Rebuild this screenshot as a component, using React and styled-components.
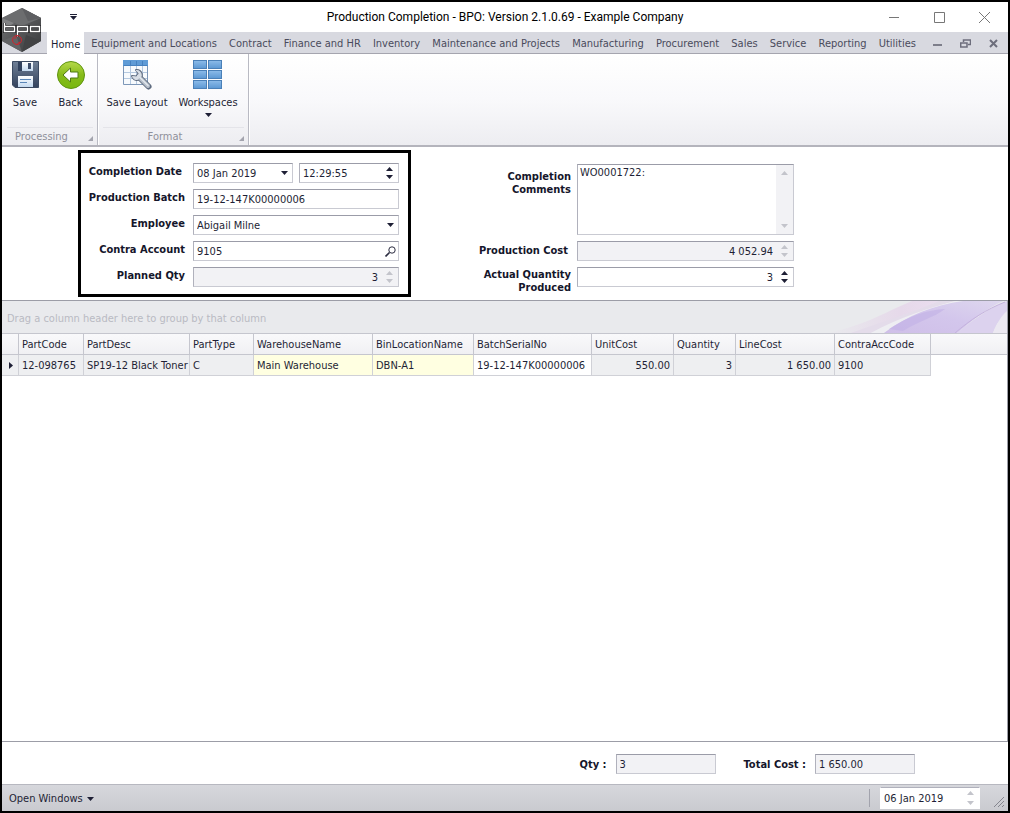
import React, { useState } from "react";
import styled, { createGlobalStyle } from "styled-components";

const GlobalStyle = createGlobalStyle`
  * { box-sizing: border-box; }
  body {
    margin: 0;
    background: #fff;
    color: #1e1f35;
    font-family: "DejaVu Sans Condensed", "DejaVu Sans", Tahoma, sans-serif;
    font-size: 11px;
    line-height: 14px;
  }
  button, input, select, textarea {
    margin: 0;
    padding: 0;
    border: 0;
    border-radius: 0;
    background: none;
    color: inherit;
    font: inherit;
    outline: none;
  }
`;

const Window = styled.div`
  display: flex;
  flex-direction: column;
  min-height: 100vh;
  border: 2px solid #000;
  position: relative;
`;

/* ---------- title bar ---------- */

const TitleBar = styled.header`
  display: grid;
  grid-template-columns: 1fr auto 1fr;
  align-items: center;
  height: 30px;
`;

const Title = styled.h1`
  margin: 0;
  color: #000;
  font-family: Roboto, "Segoe UI", sans-serif;
  font-size: 12px;
  font-weight: 400;
`;

const QuickAccess = styled.button`
  display: flex;
  justify-self: start;
  margin-left: 67px;
`;

const WindowButtons = styled.div`
  display: flex;
  justify-content: flex-end;
  gap: 34px;
  padding-right: 18px;
  button { display: flex; }
`;

const AppLogo = styled.svg`
  position: absolute;
  left: 0;
  top: 5px;
`;

/* ---------- ribbon tabs ---------- */

const TabBar = styled.div`
  display: flex;
  align-items: flex-end;
  height: 22px;
  padding-left: 45px;
  background: #d8d9e0;
  border-bottom: 1px solid #a5a5af;
`;

const Tabs = styled.nav`
  display: flex;
  flex: 1;
  justify-content: space-between;
  margin-left: 2px;
`;

const Tab = styled.button`
  height: ${(p) => (p.$active ? 22 : 21)}px;
  margin-bottom: ${(p) => (p.$active ? -1 : 0)}px;
  padding: 3px ${(p) => (p.$active ? 4 : 5)}px 0;
  color: ${(p) => (p.$active ? "#1e1f35" : "#4a4b5c")};
  background: ${(p) => (p.$active ? "#fff" : "transparent")};
  white-space: nowrap;
`;

const MdiButtons = styled.div`
  display: flex;
  align-items: center;
  gap: 18px;
  height: 20px;
  padding: 0 10px 0 12px;
  button { display: flex; }
`;

/* ---------- ribbon ---------- */

const Ribbon = styled.div`
  display: flex;
  height: 93px;
  background: linear-gradient(#fff, #f9f9fb 50%, #ededf1);
  border-bottom: 2px solid #b4b4bc;
`;

const RibbonGroup = styled.section`
  display: flex;
  flex-direction: column;
  justify-content: space-between;
  border-right: 1px solid #b9bac3;
  box-shadow: 1px 0 #fff;
`;

const RibbonItems = styled.div`
  display: flex;
  padding: 5px 4px 0 ${(p) => (p.$indent ? 4 : 0)}px;
`;

const RibbonButton = styled.button`
  display: flex;
  flex-direction: column;
  align-items: center;
  width: ${(p) => p.$width}px;
  white-space: nowrap;
  svg { display: block; }
  span { margin: 5px 0 3px; }
`;

const GroupCaption = styled.div`
  display: flex;
  align-items: flex-end;
  margin: 0 4px 1px 5px;
  padding-top: 2px;
  border-top: 1px solid #e4e4e9;
  color: #8f909b;
  h2 {
    flex: 1;
    margin: 0;
    padding-right: 12px;
    font-size: 11px;
    font-weight: 400;
    text-align: center;
  }
  svg { margin-bottom: 3px; }
`;

/* ---------- form ---------- */

const Form = styled.form`
  display: flex;
  align-items: flex-start;
  gap: 60px;
  padding: 3px 0 3px 76px;
`;

const Highlight = styled.div`
  display: grid;
  grid-template-columns: 97px 206px;
  grid-auto-rows: 20px;
  gap: 6px 8px;
  width: 333px;
  height: 147px;
  padding: 10px 0 0 7px;
  border: 3px solid #000;
`;

const Details = styled.div`
  display: grid;
  grid-template-columns: 100px 217px;
  grid-template-rows: 71px 20px 20px;
  gap: 6px;
  padding-top: 14px;
`;

const Label = styled.label`
  color: #15162b;
  font-weight: 700;
  line-height: ${(p) => (p.$stacked ? 13 : 16)}px;
  padding-top: ${(p) => p.$top || 1}px;
  padding-right: ${(p) => (p.$inset ? 3 : 0)}px;
  text-align: right;
  white-space: nowrap;
`;

const Pair = styled.div`
  display: flex;
  gap: 6px;
`;

const Box = styled.div`
  display: flex;
  flex: 1;
  height: ${(p) => (p.$tall ? 71 : 20)}px;
  min-width: 0;
  border: 1px solid #c9cad2;
  border-top-color: #9b9ca8;
  border-left-color: #b0b1bc;
  background: ${(p) => (p.$disabled ? "#f2f2f5" : "#fff")};
  position: relative;
`;

const Input = styled.input`
  flex: 1;
  width: 100%;
  min-width: 0;
  padding: 2px 3px 0;
  text-align: ${(p) => (p.$right ? "right" : "left")};
`;

const Select = styled.select`
  flex: 1;
  padding: 2px 3px 0;
  appearance: none;
`;

const SelectArrow = styled.span`
  display: flex;
  align-items: center;
  position: absolute;
  right: 4px;
  top: 0;
  bottom: 0;
  pointer-events: none;
`;

const TextArea = styled.textarea`
  flex: 1;
  padding: 0 2px;
  line-height: 15px;
  resize: none;
  overflow: hidden;
`;

const BoxButton = styled.button`
  display: flex;
  align-items: center;
  justify-content: center;
  width: 16px;
  color: #1e1f35;
`;

const SpinButtons = styled.div`
  display: flex;
  flex-direction: column;
  justify-content: space-between;
  width: 17px;
  padding: ${(p) => (p.$tall ? 6 : 3)}px 0;
  background: ${(p) => (p.$tall ? "#f2f2f5" : "none")};
  color: ${(p) => (p.$muted ? "#c3c4cb" : "#1e1f35")};
  button {
    display: flex;
    justify-content: center;
  }
`;

/* ---------- grid ---------- */

const GridArea = styled.main`
  flex: 1;
  display: flex;
  flex-direction: column;
  border: 1px solid #9c9da7;
  border-left: 0;
`;

const GroupPanel = styled.div`
  display: flex;
  align-items: center;
  justify-content: space-between;
  height: 32px;
  padding-left: 5px;
  background: #e9eaed;
  color: #b9bac3;
  span { padding-top: 3px; }
  svg { display: block; }
`;

const Table = styled.table`
  width: 100%;
  table-layout: fixed;
  border-collapse: separate;
  border-spacing: 0;
`;

const Th = styled.th`
  height: 22px;
  padding: 2px 3px 0;
  border-top: 1px solid #c5c6ce;
  border-bottom: 1px solid #c5c6ce;
  border-right: ${(p) => (p.$last ? 0 : "1px solid #c5c6ce")};
  background: linear-gradient(#f9f9fb, #f0f0f3);
  font-weight: 400;
  text-align: left;
  white-space: nowrap;
`;

const tones = { gray: "#eeeff1", yellow: "#ffffe1", white: "#fff" };

const Td = styled.td`
  height: 21px;
  padding: 2px 3px 0;
  border-right: 1px solid #d0d1d7;
  border-bottom: 1px solid #d0d1d7;
  background: ${(p) => tones[p.$tone]};
  text-align: ${(p) => (p.$right ? "right" : "left")};
  white-space: nowrap;
`;

const RowMark = styled(Td)`
  padding: 0 0 0 7px;
  svg { display: block; }
`;

/* ---------- footer ---------- */

const Totals = styled.div`
  display: flex;
  align-items: center;
  justify-content: flex-end;
  gap: 28px;
  height: 42px;
  padding-right: 93px;
  padding-top: 2px;
`;

const Total = styled.div`
  display: flex;
  align-items: center;
  gap: 9px;
`;

const TotalBox = styled(Box)`
  flex: none;
  width: 100px;
`;

const StatusBar = styled.footer`
  display: flex;
  align-items: center;
  height: 27px;
  padding-left: 7px;
  border-top: 1px solid #b7b8c0;
  background: linear-gradient(#d6d7dc, #c9cacf);
`;

const OpenWindows = styled.button`
  display: flex;
  align-items: center;
  gap: 4px;
  margin-right: auto;
  padding-top: 1px;
`;

const Divider = styled.span`
  width: 1px;
  height: 18px;
  margin-right: 10px;
  background: #a2a3ad;
`;

const StatusDate = styled(Box)`
  flex: none;
  width: 100px;
  height: 22px;
  border-color: #fff;
  border-top-color: #b0b1bc;
`;

const Grip = styled.svg`
  align-self: flex-end;
  margin: 0 3px 3px 13px;
`;

const tabs = [
  "Equipment and Locations", "Contract", "Finance and HR", "Inventory",
  "Maintenance and Projects", "Manufacturing", "Procurement", "Sales",
  "Service", "Reporting", "Utilities",
];

const columns = [
  { name: "PartCode", width: 65, value: "12-098765", tone: "gray" },
  { name: "PartDesc", width: 106, value: "SP19-12 Black Toner", tone: "gray" },
  { name: "PartType", width: 64, value: "C", tone: "gray" },
  { name: "WarehouseName", width: 119, value: "Main Warehouse", tone: "yellow" },
  { name: "BinLocationName", width: 101, value: "DBN-A1", tone: "yellow" },
  { name: "BatchSerialNo", width: 118, value: "19-12-147K00000006", tone: "white" },
  { name: "UnitCost", width: 82, value: "550.00", tone: "gray", right: true },
  { name: "Quantity", width: 62, value: "3", tone: "gray", right: true },
  { name: "LineCost", width: 99, value: "1 650.00", tone: "gray", right: true },
  { name: "ContraAccCode", width: 96, value: "9100", tone: "gray" },
];

const Arrow = ({ up }) => (
  <svg width="7" height="4" viewBox="0 0 7 4" fill="currentColor" aria-hidden="true">
    <path d={up ? "M0 4 L3.5 0 L7 4Z" : "M0 0 H7 L3.5 4Z"} />
  </svg>
);

const Spin = ({ muted, tall }) => (
  <SpinButtons $muted={muted} $tall={tall}>
    <button type="button" aria-label="Up"><Arrow up /></button>
    <button type="button" aria-label="Down"><Arrow /></button>
  </SpinButtons>
);

const Logo = () => (
  <AppLogo width="42" height="46" viewBox="0 0 42 46" aria-hidden="true">
    <defs>
      <linearGradient id="hex" x1="0" y1="0" x2="1" y2="1">
        <stop offset="0" stopColor="#77787a" />
        <stop offset="0.5" stopColor="#555658" />
        <stop offset="1" stopColor="#3a3b3d" />
      </linearGradient>
    </defs>
    <path d="M20 1 L39 11 V34 L20 45 L0 34 V11Z" fill="url(#hex)" />
    <path d="M20 1 L39 11 L20 19 L0 11Z" fill="#6c6d6f" />
    <path d="M20 1 L39 11 L26 14Z" fill="#5d5e61" />
    <path d="M0 11 L12 16 L0 24Z" fill="#828385" />
    <path d="M0 34 L14 28 L20 45Z" fill="#626365" />
    <path d="M39 34 L24 28 L20 45Z" fill="#424345" />
    <g fill="none" stroke="#252527" strokeWidth="3">
      <path d="M2.500 16 V24.500 H12.500 V19.500 H2.500 M15.500 30 V19.500 H25.500 V24.500 H15.500 M28.500 19.500 H37.500 V24.500 H28.500Z" />
    </g>
    <g fill="none" stroke="#fff" strokeWidth="1.400">
      <path d="M2.500 16 V24.500 H12.500 V19.500 H2.500 M15.500 29.500 V19.500 H25.500 V24.500 H15.500 M28.500 19.500 H37.500 V24.500 H28.500Z" />
    </g>
    <circle cx="15" cy="33" r="4.500" fill="none" stroke="#d3222b" />
    <path d="M12.500 32 L14.500 29.500 M18 35 L15.500 36.500" stroke="#d3222b" />
  </AppLogo>
);

const SaveIcon = () => (
  <svg width="32" height="32" viewBox="0 0 32 32" aria-hidden="true">
    <defs>
      <linearGradient id="disk" x1="0" y1="0" x2="0" y2="1">
        <stop offset="0" stopColor="#6f7f96" />
        <stop offset="1" stopColor="#34435d" />
      </linearGradient>
      <linearGradient id="paper" x1="0" y1="0" x2="0" y2="1">
        <stop offset="0" stopColor="#fff" />
        <stop offset="1" stopColor="#c3d9f0" />
      </linearGradient>
    </defs>
    <path d="M3.500 2.500 H29.500 V28.500 H6 L3.500 26Z" fill="url(#disk)" stroke="#3b4a62" />
    <path d="M9 3 H24 V12 H9Z" fill="#31415d" />
    <path d="M13 3 H24 V12 H13Z" fill="url(#paper)" />
    <path d="M19 4 H22 V10 H19Z" fill="#3c4d6b" />
    <path d="M9 17 H24 V28 H9Z" fill="url(#paper)" />
    <path d="M11 20.500 H22 M11 23.500 H18" stroke="#5a86b8" />
  </svg>
);

const BackIcon = () => (
  <svg width="32" height="32" viewBox="0 0 32 32" aria-hidden="true">
    <defs>
      <linearGradient id="green" x1="0" y1="0" x2="0" y2="1">
        <stop offset="0" stopColor="#b6d94a" />
        <stop offset="0.5" stopColor="#86bb1a" />
        <stop offset="1" stopColor="#79b80f" />
      </linearGradient>
    </defs>
    <circle cx="16" cy="16" r="13.500" fill="url(#green)" stroke="#5f9410" />
    <path d="M8 16 L15.500 9 V13 H23 V19 H15.500 V23Z" fill="#fff" stroke="#4f7a12" strokeLinejoin="round" />
  </svg>
);

const LayoutIcon = () => (
  <svg width="32" height="32" viewBox="0 0 32 32" aria-hidden="true">
    <path d="M2.500 1.500 H26.500 V25.500 H2.500Z" fill="#f7fafd" stroke="#7d97b8" />
    <path d="M9.500 7 V25 M15.500 7 V25 M21.500 7 V25 M3 13.500 H26 M3 19.500 H26" stroke="#b5c9e0" />
    <path d="M2 1 H27 V7 H2Z" fill="#5f9bd6" />
    <path d="M2.500 6.500 H26.500 M9.500 2 V6 M15.500 2 V6 M21.500 2 V6" stroke="#4681bf" />
    <g fill="none" strokeLinecap="round">
      <path d="M15 11 A5 5 0 1 1 11 17 L15.500 17.500 L17.500 14.500Z" fill="#5d6a7e" stroke="#5d6a7e" strokeWidth="2" strokeLinejoin="round" />
      <path d="M20 20 L27.500 27.500" stroke="#5d6a7e" strokeWidth="6" />
      <path d="M15.500 11.500 A4.500 4.500 0 1 1 11.500 17.500 L15.500 18 L18 14.500Z" fill="#d8dee6" stroke="#d8dee6" strokeWidth="1" strokeLinejoin="round" />
      <path d="M20 20 L27 27" stroke="#b4bdc9" strokeWidth="4" />
      <path d="M19 18.500 L27 26.500" stroke="#e3e8ee" strokeWidth="1.500" />
    </g>
  </svg>
);

const WorkspacesIcon = () => (
  <svg width="32" height="32" viewBox="0 0 32 32" aria-hidden="true">
    <defs>
      <linearGradient id="tile" x1="0" y1="0" x2="0" y2="1">
        <stop offset="0" stopColor="#8dbce9" />
        <stop offset="1" stopColor="#5b97d3" />
      </linearGradient>
    </defs>
    {[1.5, 11.5, 21.5].map((y) => [1.5, 16.5].map((x) => (
      <rect key={x + "-" + y} x={x} y={y} width="13" height="8" fill="url(#tile)" stroke="#4a80b8" />
    )))}
  </svg>
);

const Launcher = () => (
  <svg width="5" height="5" viewBox="0 0 5 5" aria-hidden="true">
    <path d="M5 0 V5 H0Z" fill="#a3a4ae" />
  </svg>
);

// purple ribbons on the right of the group panel
const Swoosh = () => (
  <svg width="180" height="32" viewBox="0 0 180 32" aria-hidden="true">
    <defs>
      <linearGradient id="pink" x1="0" y1="0" x2="1" y2="0">
        <stop offset="0" stopColor="#e9eaed" />
        <stop offset="0.600" stopColor="#e6d9ea" />
        <stop offset="1" stopColor="#ecdff0" />
      </linearGradient>
      <linearGradient id="violet" x1="0" y1="1" x2="1" y2="0">
        <stop offset="0" stopColor="#cfbfe8" />
        <stop offset="0.500" stopColor="#d3c6ec" />
        <stop offset="1" stopColor="#ded7ee" />
      </linearGradient>
    </defs>
    <path d="M0 32 C40 24 60 10 85 0 H124 C95 10 65 22 40 32Z" fill="url(#pink)" />
    <path d="M24 32 C58 20 90 10 112 0 H128 C98 9 68 20 44 32Z" fill="#e4dcea" />
    <path d="M44 32 C73 16 102 7 128 0 H138 C108 8 82 20 58 32Z" fill="#eeeef2" />
    <path d="M57 32 C81 14 107 4 136 0 H176 C158 8 145 20 130 32Z" fill="url(#violet)" />
    <path d="M62 28 C82 15 100 9 118 8 C108 16 92 20 76 30Z" fill="#c2b0e6" opacity="0.600" />
    <path d="M130 32 C145 20 160 8 178 1 L180 0 V12 C172 18 168 26 166 32Z" fill="#dcd2ee" />
    <path d="M128 32 C143 19 160 8 178 1" fill="none" stroke="#c5b2de" />
    <path d="M166 32 C169 24 174 15 180 10 V32Z" fill="#ebe8f1" />
  </svg>
);

const App = () => {
  const [activeTab, setActiveTab] = useState("Home");

  return (
    <>
      <GlobalStyle />
      <Window>
        <TitleBar>
          <QuickAccess type="button" aria-label="Customize quick access">
            <svg width="9" height="6" viewBox="0 0 9 6"><path d="M1 0 H8 V1 H1Z M1 2 H8 L4.500 6Z" fill="#1e1f35" /></svg>
          </QuickAccess>
          <Title>Production Completion - BPO: Version 2.1.0.69 - Example Company</Title>
          <WindowButtons>
            <button type="button" aria-label="Minimize">
              <svg width="11" height="11" viewBox="0 0 11 11"><path d="M0 5.500 H10" stroke="#777" /></svg>
            </button>
            <button type="button" aria-label="Maximize">
              <svg width="11" height="11" viewBox="0 0 11 11"><path d="M0.500 0.500 H10.500 V10.500 H0.500Z" fill="none" stroke="#777" /></svg>
            </button>
            <button type="button" aria-label="Close">
              <svg width="11" height="11" viewBox="0 0 11 11"><path d="M0 0 L11 11 M11 0 L0 11" stroke="#777" /></svg>
            </button>
          </WindowButtons>
        </TitleBar>

        <TabBar>
          <Tab type="button" $active={activeTab === "Home"} onClick={() => setActiveTab("Home")}>Home</Tab>
          <Tabs>
            {tabs.map((tab) => (
              <Tab key={tab} type="button" $active={activeTab === tab} onClick={() => setActiveTab(tab)}>{tab}</Tab>
            ))}
          </Tabs>
          <MdiButtons>
            <button type="button" aria-label="Minimize document">
              <svg width="9" height="9" viewBox="0 0 9 9"><path d="M0 5 H9 V7 H0Z" fill="#7d7e8a" /></svg>
            </button>
            <button type="button" aria-label="Restore document">
              <svg width="11" height="9" viewBox="0 0 11 9">
                <path d="M3.500 3 V1 H10.500 V5.500 H8" fill="none" stroke="#6d6e7c" strokeWidth="1.500" />
                <path d="M0.700 4 H7 V8 H0.700Z" fill="none" stroke="#6d6e7c" strokeWidth="1.500" />
              </svg>
            </button>
            <button type="button" aria-label="Close document">
              <svg width="9" height="9" viewBox="0 0 9 9"><path d="M1 1 L8 8 M8 1 L1 8" stroke="#6d6e7c" strokeWidth="2" /></svg>
            </button>
          </MdiButtons>
        </TabBar>
        <Logo />

        <Ribbon>
          <RibbonGroup>
            <RibbonItems>
              <RibbonButton type="button" $width={46}><SaveIcon /><span>Save</span></RibbonButton>
              <RibbonButton type="button" $width={45}><BackIcon /><span>Back</span></RibbonButton>
            </RibbonItems>
            <GroupCaption><h2>Processing</h2><Launcher /></GroupCaption>
          </RibbonGroup>
          <RibbonGroup>
            <RibbonItems $indent>
              <RibbonButton type="button" $width={70}><LayoutIcon /><span>Save Layout</span></RibbonButton>
              <RibbonButton type="button" $width={72}><WorkspacesIcon /><span>Workspaces</span><Arrow /></RibbonButton>
            </RibbonItems>
            <GroupCaption><h2>Format</h2><Launcher /></GroupCaption>
          </RibbonGroup>
        </Ribbon>

        <Form onSubmit={(e) => e.preventDefault()}>
          <Highlight>
            <Label htmlFor="date" $inset>Completion Date</Label>
            <Pair>
              <Box>
                <Input id="date" defaultValue="08 Jan 2019" />
                <BoxButton type="button" aria-label="Open calendar"><Arrow /></BoxButton>
              </Box>
              <Box>
                <Input aria-label="Completion time" defaultValue="12:29:55" />
                <Spin />
              </Box>
            </Pair>
            <Label htmlFor="batch">Production Batch</Label>
            <Box><Input id="batch" defaultValue="19-12-147K00000006" /></Box>
            <Label htmlFor="employee">Employee</Label>
            <Box>
              <Select id="employee" defaultValue="Abigail Milne">
                <option>Abigail Milne</option>
              </Select>
              <SelectArrow><Arrow /></SelectArrow>
            </Box>
            <Label htmlFor="contra">Contra Account</Label>
            <Box>
              <Input id="contra" defaultValue="9105" />
              <BoxButton type="button" aria-label="Search account">
                <svg width="11" height="11" viewBox="0 0 11 11" fill="none" stroke="#2b2c40">
                  <circle cx="7" cy="4" r="3.200" />
                  <path d="M4.500 6.500 L0.500 10.500" strokeWidth="1.600" />
                </svg>
              </BoxButton>
            </Box>
            <Label htmlFor="planned">Planned Qty</Label>
            <Box $disabled>
              <Input id="planned" $right readOnly value="3" />
              <Spin muted />
            </Box>
          </Highlight>

          <Details>
            <Label htmlFor="comments" $stacked $top={6}>Completion<br />Comments</Label>
            <Box $tall>
              <TextArea id="comments" defaultValue="WO0001722:" />
              <Spin muted tall />
            </Box>
            <Label htmlFor="cost" $inset $top={2}>Production Cost</Label>
            <Box $disabled>
              <Input id="cost" $right readOnly value="4 052.94" />
              <Spin muted />
            </Box>
            <Label htmlFor="actual" $stacked>Actual Quantity<br />Produced</Label>
            <Box>
              <Input id="actual" $right defaultValue="3" />
              <Spin />
            </Box>
          </Details>
        </Form>

        <GridArea>
          <GroupPanel>
            <span>Drag a column header here to group by that column</span>
            <Swoosh />
          </GroupPanel>
          <Table>
            <colgroup>
              <col width="17" />
              {columns.map((c) => <col key={c.name} width={c.width} />)}
              <col />
            </colgroup>
            <thead>
              <tr>
                <Th />
                {columns.map((c) => <Th key={c.name}>{c.name}</Th>)}
                <Th $last />
              </tr>
            </thead>
            <tbody>
              <tr>
                <RowMark $tone="gray">
                  <svg width="4" height="7" viewBox="0 0 4 7"><path d="M0 0 L4 3.500 L0 7Z" fill="#1e1f35" /></svg>
                </RowMark>
                {columns.map((c) => <Td key={c.name} $tone={c.tone} $right={c.right}>{c.value}</Td>)}
              </tr>
            </tbody>
          </Table>
        </GridArea>

        <Totals>
          <Total>
            <Label htmlFor="qty">Qty :</Label>
            <TotalBox $disabled><Input id="qty" readOnly value="3" /></TotalBox>
          </Total>
          <Total>
            <Label htmlFor="total">Total Cost :</Label>
            <TotalBox $disabled><Input id="total" readOnly value="1 650.00" /></TotalBox>
          </Total>
        </Totals>

        <StatusBar>
          <OpenWindows type="button">Open Windows <Arrow /></OpenWindows>
          <Divider />
          <StatusDate>
            <Input aria-label="Working date" defaultValue="06 Jan 2019" />
            <Spin muted />
          </StatusDate>
          <Grip width="12" height="12" viewBox="0 0 12 12" aria-hidden="true">
            <path d="M1 11 L11 1 M5 11 L11 5 M9 11 L11 9" stroke="#85868f" />
          </Grip>
        </StatusBar>
      </Window>
    </>
  );
};

export default App;
